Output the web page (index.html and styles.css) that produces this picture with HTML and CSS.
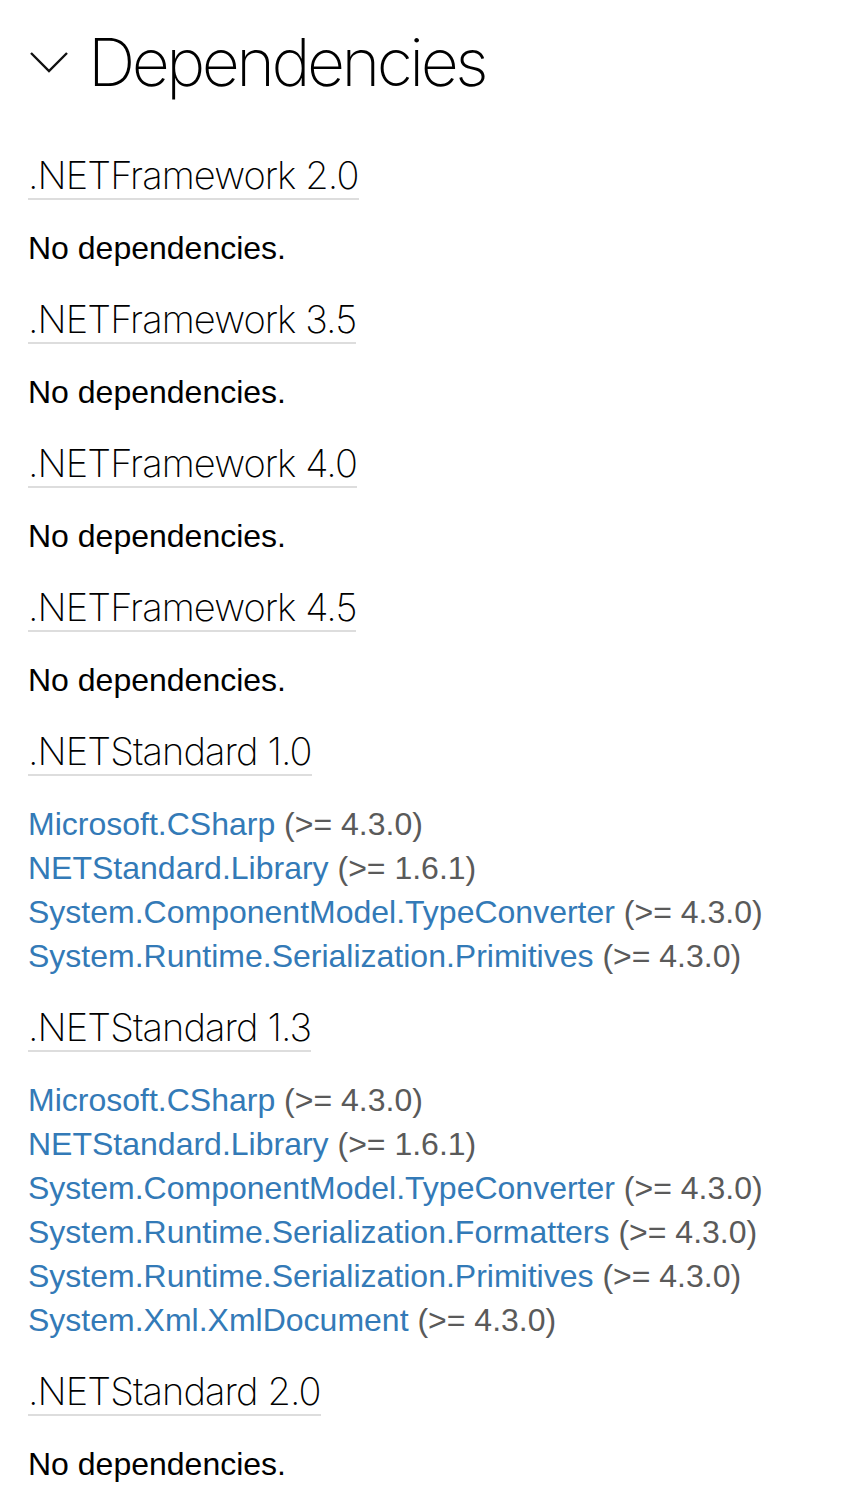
FILE: index.html
```html
<!DOCTYPE html>
<html>
<head>
<meta charset="utf-8">
<link rel="stylesheet" href="styles.css">
</head>
<body>
<div class="wrap">
  <h1 class="title">
    <svg class="chev" width="40" height="22" viewBox="0 0 40 22"><path d="M2 2 L20 20 L38 2" fill="none" stroke="#111" stroke-width="2.4"/></svg>
    <span>Dependencies</span>
  </h1>

  <section class="group">
    <h3 class="fw">.NETFramework 2.0</h3>
    <p class="none">No dependencies.</p>
  </section>
  <section class="group">
    <h3 class="fw">.NETFramework 3.5</h3>
    <p class="none">No dependencies.</p>
  </section>
  <section class="group">
    <h3 class="fw">.NETFramework 4.0</h3>
    <p class="none">No dependencies.</p>
  </section>
  <section class="group">
    <h3 class="fw">.NETFramework 4.5</h3>
    <p class="none">No dependencies.</p>
  </section>
  <section class="group">
    <h3 class="fw">.NETStandard 1.0</h3>
    <ul class="deps">
      <li><a href="#">Microsoft.CSharp</a> <span class="ver">(&gt;= 4.3.0)</span></li>
      <li><a href="#">NETStandard.Library</a> <span class="ver">(&gt;= 1.6.1)</span></li>
      <li><a href="#">System.ComponentModel.TypeConverter</a> <span class="ver">(&gt;= 4.3.0)</span></li>
      <li><a href="#">System.Runtime.Serialization.Primitives</a> <span class="ver">(&gt;= 4.3.0)</span></li>
    </ul>
  </section>
  <section class="group">
    <h3 class="fw">.NETStandard 1.3</h3>
    <ul class="deps">
      <li><a href="#">Microsoft.CSharp</a> <span class="ver">(&gt;= 4.3.0)</span></li>
      <li><a href="#">NETStandard.Library</a> <span class="ver">(&gt;= 1.6.1)</span></li>
      <li><a href="#">System.ComponentModel.TypeConverter</a> <span class="ver">(&gt;= 4.3.0)</span></li>
      <li><a href="#">System.Runtime.Serialization.Formatters</a> <span class="ver">(&gt;= 4.3.0)</span></li>
      <li><a href="#">System.Runtime.Serialization.Primitives</a> <span class="ver">(&gt;= 4.3.0)</span></li>
      <li><a href="#">System.Xml.XmlDocument</a> <span class="ver">(&gt;= 4.3.0)</span></li>
    </ul>
  </section>
  <section class="group">
    <h3 class="fw">.NETStandard 2.0</h3>
    <p class="none">No dependencies.</p>
  </section>
</div>
</body>
</html>
```
FILE: styles.css
```css
html, body {
  margin: 0;
  padding: 0;
  background: #fff;
}
body {
  font-family: "Liberation Sans", Arial, sans-serif;
  color: #000;
}
.wrap {
  padding: 22px 0 0 28px;
}
.title {
  display: flex;
  align-items: center;
  gap: 19px;
  margin: 0 0 50px 0;
  font-family: Inter, "Liberation Sans", sans-serif;
  font-weight: 200;
  font-size: 66px;
  line-height: 80px;
  letter-spacing: -3.5px;
  color: #000;
}
.chev {
  display: block;
  flex: none;
  margin-left: 1px;
}
.group {
  margin: 0;
}
.fw {
  display: inline-block;
  margin: 0;
  font-family: Inter, "Liberation Sans", sans-serif;
  font-weight: 200;
  font-size: 38px;
  line-height: 46px;
  letter-spacing: -0.9px;
  color: #000;
  border-bottom: 2px solid #dddddd;
}
.none, .deps {
  margin: 26px 0 26px 0;
  font-size: 32px;
  line-height: 44px;
}
.deps {
  list-style: none;
  padding: 0;
}
.deps a {
  color: #337ab7;
  text-decoration: none;
}
.deps .ver {
  color: #5a5a5a;
}
```
